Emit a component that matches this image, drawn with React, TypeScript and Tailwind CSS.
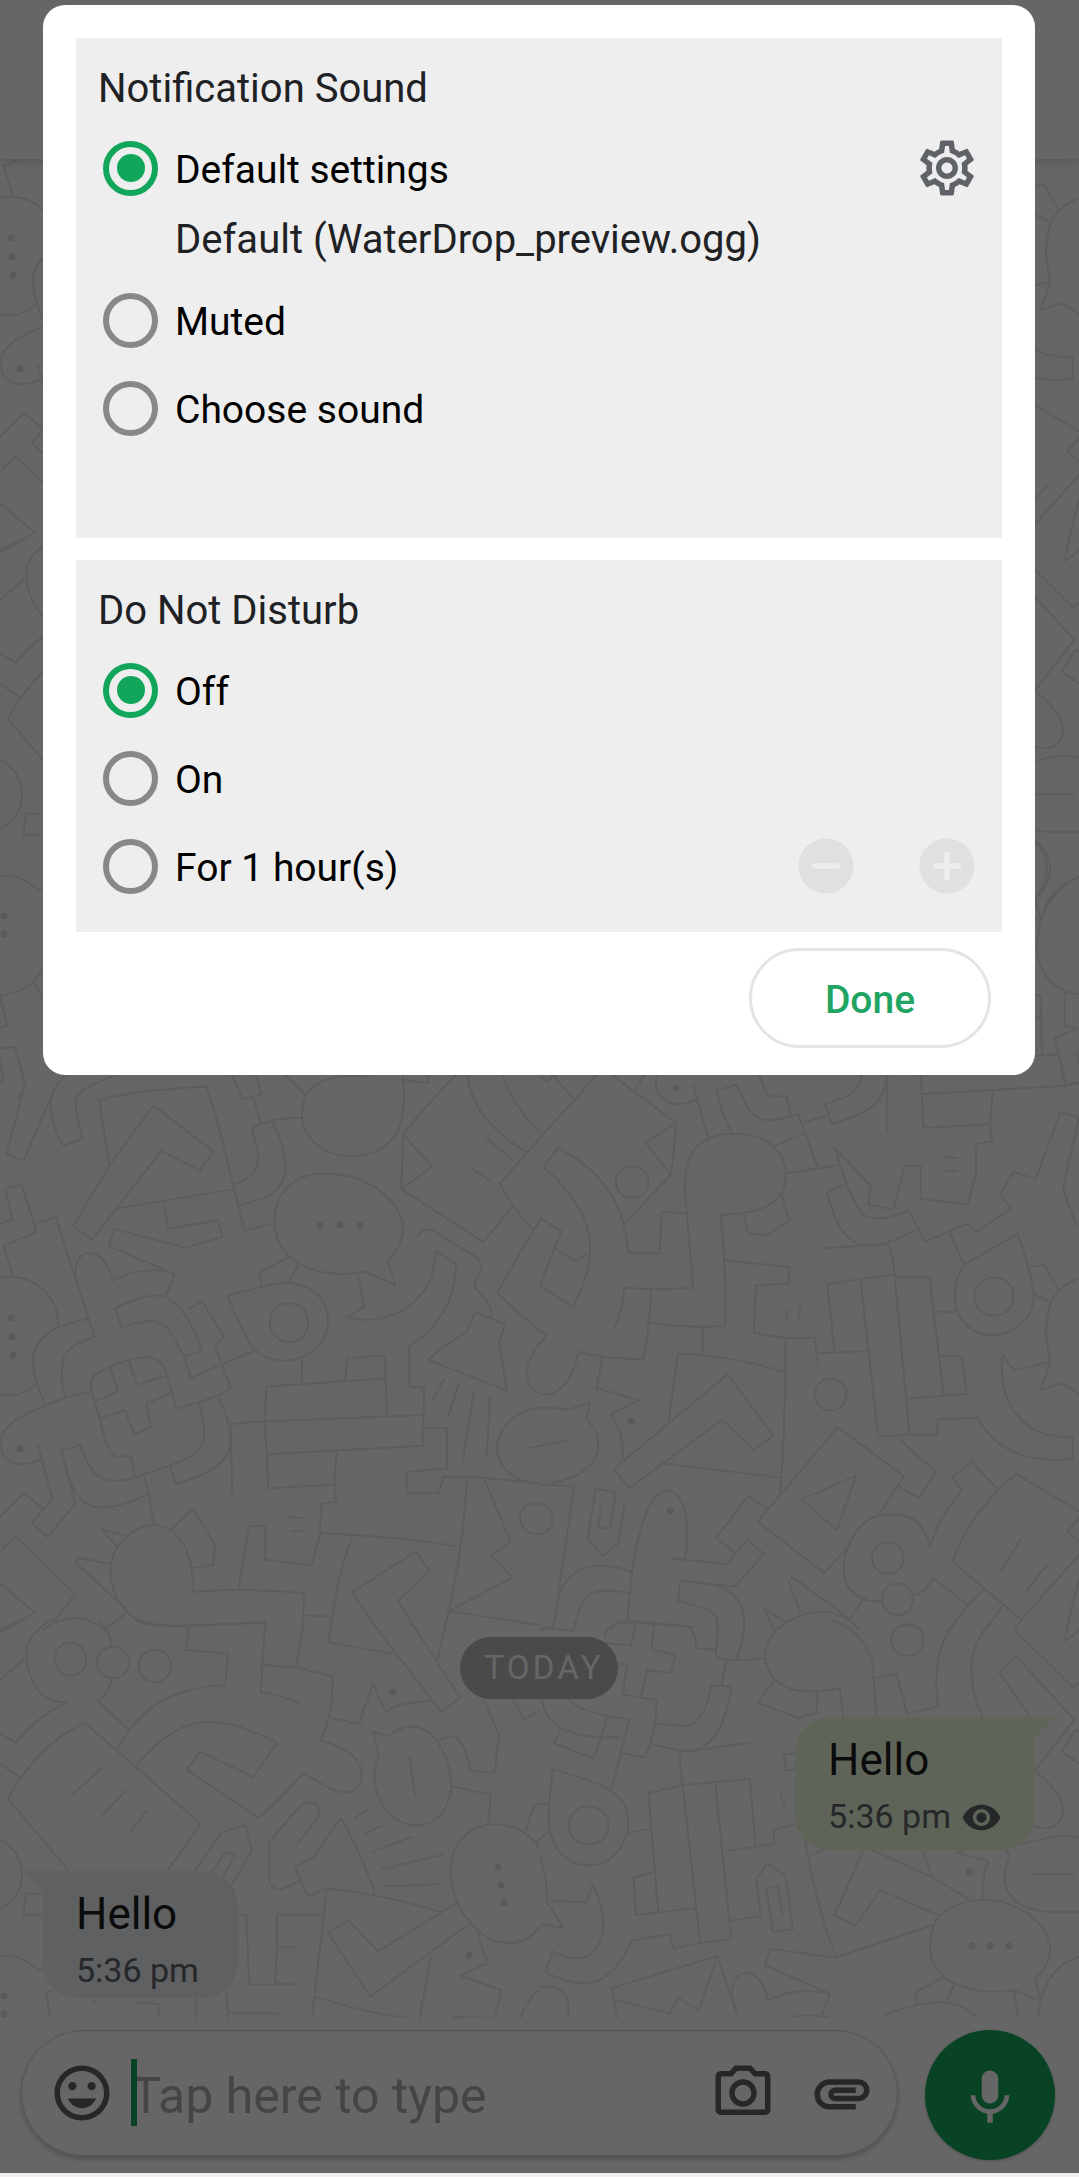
import { useState } from 'react';
import type { ReactNode } from 'react';
import { MdAddCircle, MdAttachment, MdMic, MdOutlineSettings, MdRemoveCircle, MdVisibility } from 'react-icons/md';

const upperLeftLines = [
  'M0 34L10 36L6 0M63 0L73 42L18 237L68 253L146 82M190 14Q148 50 147 100Q146 145 184 211L241 192Q205 90 230 66Q248 45 328 17',
  'M288 83Q400 56 598 46Q640 160 676 322L710 449L797 429M288 83L317 268M213 437L317 268L445 99L620 228L580 282L468 227L267 475ZM340 388L673 335M474 371L489 445L633 420L646 467L536 498L332 445L316 493L508 572L482 633',
  'M673 14L705 83L760 67L742 14M736 78L757 147M730 160L789 142Q828 210 829 270C829 330 790 360 687 380M730 160L750 235Q756 295 676 322M789 142Q820 135 877 134M828 14L890 73M1072 18Q876 0 877 128C878 190 940 242 1015 242C1105 242 1162 195 1170 115Q1176 70 1169 14M1173 28L1242 37L1244 14',
  'M1325 14Q1230 105 1171 180L1254 271L1165 333L1171 180M1165 333L1404 482L1488 381M1356 14C1370 110 1440 180 1530 230M1460 14Q1490 105 1568 175M1568 190L1452 318Q1490 390 1550 448M1568 420Q1490 540 1444 626L1568 732M1412 190L1490 252M1369 275L1429 315',
  'M797 420C800 345 850 290 945 290C1070 290 1170 370 1170 443Q1168 495 1126 535L1148 602L1058 564C950 590 795 550 797 420ZM836 524L754 568L759 608M867 545L838 598M1038 570L1058 662L1006 694C1150 720 1262 640 1265 507L1323 542Q1325 690 1188 773L1188 886L1231 889L1228 1052L775 1076M1211 468Q1225 440 1256 449L1380 522C1420 553 1375 580 1379 605C1384 628 1435 645 1426 694',
  'M1380 677L1466 712L1449 766L1472 898L1242 811Q1300 765 1356 732ZM1290 863L1257 923M1332 879L1302 968M1376 898L1343 1098M1423 914L1413 1084',
  'M661 631L759 608C870 575 952 620 952 704C950 800 820 850 742 785Q720 770 661 631ZM838 653C805 652 784 678 784 705C784 740 810 762 840 762C875 762 895 738 894 705C893 672 872 653 838 653ZM742 785L642 825M878 812L876 874M1002 867L1008 807L1117 799L1124 969M1117 864L773 886L768 984L775 1076L778 1171L973 1161M670 992Q710 985 768 984L1228 966M670 992L674 1187M1232 1002L1298 1003V1116L1180 1126V1184H1275L1288 1139H1356L1404 1142L1568 1158M977 1068L971 1161L976 1209L932 1215L930 1297L905 1386L769 1371V1278H723L691 1457M836 1252L878 1256M845 1291H878',
  'M15 331L63 321L106 453L11 493L38 578M0 431L36 420L15 331M102 430L162 412L274 747C190 775 160 800 190 918M0 582C95 567 170 630 170 719L255 695M170 719C80 765 75 825 134 941M0 908C45 916 78 905 102 881',
  'M220 575C210 490 310 490 327 590C385 560 450 552 508 572M334 668L353 720C470 690 475 690 534 803L586 787Q548 670 482 635Q430 620 334 668ZM545 672L588 647L650 748L625 772L670 892C630 918 580 930 512 948L482 845C465 795 420 792 320 830C255 855 260 875 267 902L293 990Q315 1075 335 1083L380 1081L392 1137M534 803L554 862L642 825M374 815L398 881L481 857M320 830L342 900L278 927M290 975L362 952L390 1020L439 1000L424 935L496 904',
  'M267 902Q180 915 120 945C0 990 0 1030 2 1052C8 1110 70 1112 116 1091M109 1048L152 1200L92 1269L138 1308L219 1213L178 1066L234 1051C265 1130 290 1180 417 1132C580 1080 620 1075 578 935M492 1107L511 1160Q668 1115 668 1045Q670 980 634 917M192 1120C230 1250 300 1245 432 1187L417 1132M432 1187L447 1272M0 1252L69 1185L125 1228',
  'M370 1305L297 1287L343 1338M326 1385L229 1365L219 1380L365 1507M370 1305C285 1375 325 1490 385 1530C430 1565 520 1558 769 1546M370 1305C470 1225 570 1310 559 1461Q730 1450 882 1465L880 1568M499 1285L561 1228L626 1335L618 1386L559 1395M0 1352L43 1305L219 1468L155 1545M0 1437L102 1521L0 1568M0 1326L13 1335M125 1568C200 1515 250 1530 304 1568L365 1521M548 1557V1568M769 1546V1568M882 1527L962 1531',
  'M930 1297Q1150 1305 1327 1334M1022 1307Q975 1430 960 1568M1356 1139Q1345 1360 1290 1568M1404 1142L1482 1321L1426 1359L1488 1422L1303 1515L1568 1555M1098 1568L1022 1463L1208 1348L1247 1403L1155 1486L1208 1568M1568 760C1515 830 1520 890 1568 905M1568 945C1420 965 1400 1120 1530 1153M1528 1060L1568 1053M1568 1213C1490 1210 1490 1300 1568 1301',
];

const upperRightLines = [
  'M0 18L22 34L37 14L97 80M165 14L0 190M210 14L397 149L381 294L307 203L397 149M303 14L275 59M381 294L246 429M340 14C325 80 380 115 454 83M445 40L491 198M513 57L571 42C620 150 640 155 751 124L807 271M513 57Q535 145 562 180M637 14L658 65Q675 78 717 73L729 125M935 14Q935 55 886 76L829 97L848 151C960 120 1005 90 1008 14M765 147L833 128M1010 14V178M1107 14L1116 162L1310 152M1113 67L1530 44L1516 0M1530 44L1568 38M1316 60L1310 152L1315 200L1269 207L1268 290L1244 376L1107 361V269H1060L1028 391L956 377L962 325L858 218Q910 390 945 408Q980 428 1073 395L1120 481L1242 431L1269 453L1370 389L1338 348L1377 286L1442 305L1513 119L1568 132L1521 332L1559 432H1568M1175 243L1215 248M1180 282H1215',
  'M446 610L427 401C410 280 420 180 565 178C660 180 715 225 715 300C710 380 630 405 525 405Q545 600 537 717C470 720 390 720 320 707M674 216L768 178M714 290L865 267M702 344L725 422L659 463L606 457L591 402M10 271L52 218C180 280 248 380 256 511L348 514L354 397L425 401M10 271C190 420 160 540 97 663L0 606M0 414L62 451L0 600M43 500L103 535L145 509M267 270C205 270 205 357 267 357C330 357 335 270 267 270Z',
  'M834 342L886 322M834 342C865 450 900 500 975 490Q1025 485 1092 448M815 499L1014 488Q1028 520 1031 572L835 599L857 789M932 588L984 1027L1075 1021L1031 572M1031 579H1133L1174 911M808 793L954 787M1190 452L1234 546M1150 676L1215 678M1164 801H1226L1241 907L1068 920M1073 1021H1155L1158 978L1273 974Q1350 1110 1549 1089V1027C1400 1035 1330 930 1345 795L1377 842L1485 817L1455 898L1518 877L1568 907M1234 546L1389 459Q1440 600 1436 645C1415 760 1250 780 1212 670Q1195 600 1234 546ZM1322 581C1245 581 1245 688 1322 688C1395 688 1395 581 1322 581ZM1421 552L1464 545L1511 618M1437 628L1490 653M1568 583C1465 615 1460 720 1485 817',
  'M537 532L723 552L725 598L628 603L622 736L714 751L799 749L809 830M717 670V704M757 660L753 700M446 610Q350 618 244 610Q245 665 217 721M322 616Q322 690 301 810Q180 808 113 789Q80 920 0 907M0 731L18 742L0 768M181 804L165 891L288 925L206 964Q245 1020 242 1088M473 719V796M375 980L401 794Q550 798 707 845M714 751Q715 980 698 1193M214 1118L546 852L678 1024L621 1064L530 979L260 1171ZM358 1101L698 1141M845 865C785 865 785 953 845 953C907 953 907 865 845 865Z',
  'M633 1265L866 1000L1058 1137L984 1249M633 1265L826 1408L902 1330M760 1203L919 1136L864 1288ZM1040 1030L1152 1126L1101 1199L1044 1166M660 1229L606 1192L513 1309L566 1352M380 1367L543 1384L602 1315L651 1355L567 1447L408 1430L401 1487C500 1510 520 1515 518 1568M505 1440Q600 1465 594 1568M984 1249C1050 1240 1110 1240 1134 1335Q1160 1250 1229 1178L1198 1141L1255 1096L1330 1173M984 1249C880 1270 820 1500 995 1487M1087 1473Q1125 1462 1142 1421L1244 1499M1012 1322C950 1322 950 1410 1012 1410C1073 1410 1073 1322 1012 1322ZM1040 1438C980 1438 980 1526 1040 1526C1100 1526 1100 1438 1040 1438ZM1568 1236L1384 1131Q1240 1250 1201 1378L1400 1539L1568 1358M1400 1311L1337 1409M1475 1385L1412 1463M1568 1255L1535 1291L1568 1322M1293 1453Q1240 1500 1190 1568M1345 1501L1298 1568M1400 1539L1378 1568M1568 1425L1530 1568',
  'M0 945Q45 944 79 952L147 932L134 977C210 1050 160 1140 30 1156M0 1053L81 1037M0 1160L99 1166L40 1558L0 1568M0 1215C48 1220 48 1295 0 1300M162 1171L220 1183L204 1283H170L178 1220M162 1171L139 1313L182 1361L228 1326L246 1213M255 1540C270 1320 310 1180 370 1178C430 1180 435 1290 422 1367M52 1483C80 1380 180 1370 270 1408M100 1568C120 1455 150 1450 260 1464M205 1568Q220 1540 255 1541L445 1560M758 1520L724 1436L735 1420L902 1538L945 1473M711 1544L652 1509L680 1568M690 1568C770 1500 870 1500 930 1568M1030 1568Q1070 1540 1110 1568',
];

const lowerLeftLines = [
  'M0 34Q40 18 65 0M0 170L79 101M120 20C60 65 70 130 105 190Q130 230 192 233Q110 270 45 346L0 318M120 20Q140 3 160 0M285 0Q315 20 325 76M325 163Q320 200 285 228L376 311M304 28L340 0M205 65C145 65 145 157 205 157C265 157 265 65 205 65ZM329 76C265 76 265 163 329 163C390 163 390 76 329 76ZM449 84C388 84 388 175 449 175C512 175 512 84 449 84Z',
  'M390 0Q440 22 545 17L770 7L757 203Q810 210 868 234M548 17L540 84L662 96L654 184Q430 190 340 366M394 410C520 270 620 250 804 346L735 442L581 370L542 422L751 557Q810 510 881 430C960 480 1030 520 1052 440C1050 390 1010 360 931 339Q970 260 965 158L862 134L766 127M882 0Q875 60 860 132M962 0L954 63L1143 96M1075 0L1281 259L1336 218L1190 0M1295 0L1270 115M954 274L1043 293L1083 177L1120 258Q1160 230 1250 228',
  'M22 502Q120 340 247 290L583 574L485 707M22 502L198 704M299 414L210 492M366 479L297 551M427 536L377 597M0 405L59 443M0 618C85 655 85 780 0 812M125 770L77 771L68 832L125 830M0 945Q60 940 108 986L133 975',
  'M565 707L644 597L714 578L731 649L670 750M615 710L656 651L683 665L645 728M862 632L925 555C935 510 890 500 865 530L782 625V725C782 755 800 760 815 758L872 736M857 695L911 667L990 557Q1060 680 1089 775M857 695L893 778L949 755Q1130 775 1278 822M949 755L906 1121M1028 560L1072 531M1053 605L1110 578M1077 654L1198 609M1104 702L1287 661M1115 750L1277 743',
  'M1083 314L1126 327C1240 240 1310 380 1311 470C1295 620 1120 610 1089 465Q1085 420 1100 379ZM1188 383L1206 500M1270 338L1316 327Q1350 340 1366 425L1436 430L1449 322L1403 222M1311 468L1425 492L1417 580M1568 520H1550L1522 605M1568 615L1550 630M1568 645C1510 560 1420 570 1380 587C1230 660 1340 910 1475 910Q1530 910 1568 865M1490 222L1521 280L1568 255',
  'M688 831H716L723 1027H858M860 1027L799 1020L804 922H865M804 922V830H938M953 882L1011 845L1098 933L1332 793M953 882L1075 1060L1370 850M1390 878Q1390 910 1418 966L1335 1001L1455 1042L1437 1121M1252 943L1218 1121M915 1060Q1070 1110 1200 1122M135 1045L144 1121M135 1045L160 1042M270 1068L276 1077L282 1068M392 1064L398 1077L460 1081V1121M568 1064V1121M658 1042L662 1121M662 1105L812 1108L813 1121M762 1108V1121M1568 1040Q1530 1065 1512 1121M1313 1117L1427 1121',
];

const lowerRightLines = [
  'M0 22L98 31L103 0M38 22L40 0M188 48Q195 0 280 8L430 18Q450 25 455 80L512 84Q520 40 512 0M190 65L264 72L280 8M332 14L324 82L393 99L381 149L312 141L293 217M220 122L254 127L241 210L339 226Q340 310 305 387L234 374M235 330Q20 340 5 222M82 222Q120 265 260 279L208 477M512 84V105Q560 118 657 108M595 0Q594 60 572 108M541 112L529 184L556 190Q530 370 420 370L324 350M529 184L498 186Q480 290 425 298L337 292M62 302L40 347L155 390Q175 350 195 270M425 370L612 345',
  'M725 0C640 50 640 120 683 167C730 210 810 205 872 192L882 272M683 167L633 233L753 276L804 261L806 204M850 0C930 30 970 80 970 160L978 272M970 165L1037 151L1068 263L1158 243Q1135 80 1215 0M1068 12C1005 12 1005 100 1068 100C1132 100 1132 12 1068 12ZM1315 0C1240 80 1240 170 1287 272M1400 0L1380 27L1549 189L1568 178M1540 0L1525 59L1568 30M1425 272L1335 147L1384 101L1554 281L1440 424M1568 312H1555L1519 371L1568 404M1440 424C1510 480 1540 530 1510 570C1490 590 1460 590 1432 578',
  'M37 419L172 462C250 500 260 530 256 590C225 720 90 710 47 640C20 590 20 560 37 419ZM142 525C65 525 65 632 142 632C218 632 218 525 142 525ZM0 518H25M0 616L25 597M255 600L318 588M0 665Q20 720 20 790L135 795L154 742C225 890 160 1000 37 933L16 991C130 1050 210 1030 266 902L377 885L389 925L466 909M20 793L68 866L0 857M409 375Q405 420 415 465L466 909L556 899L510 460M315 487L344 824M315 487L415 465L610 447L627 635M537 651L680 630V589L750 573M329 710L272 725L279 831L453 811M555 847L642 834L629 730L661 685L714 719L736 870L677 878L659 755L692 748L706 829M741 375L709 379L716 423L741 420M700 490L712 529M741 490L744 515',
  'M770 610Q800 800 862 949L1145 858M787 662L825 645M941 647L856 832L919 860L989 760L1160 832M965 647L1142 725L1250 787M1112 647L1142 725M1213 655L1303 679Q1285 720 1290 785M1213 655L1235 647M1355 645L1368 667C1330 730 1350 820 1500 823H1568M1390 632Q1450 620 1480 612T1568 612M1432 716H1556M1568 948Q1460 980 1449 1121M1568 612',
  'M1165 830C1240 770 1340 780 1410 820C1500 880 1505 950 1440 1012L1457 1073L1377 1042C1230 1060 1130 1010 1135 910Q1138 860 1165 830ZM1175 1006L1092 1046L1098 1085M1205 1025L1180 1077M1377 1042L1392 1121M998 1113C1120 1070 1210 1055 1273 1121M862 951L671 926L654 972L844 1052L820 1112M225 1121L208 1036L516 946L578 1121M516 946L461 1100L401 1062L377 1108L218 1069M565 1090C545 1030 570 990 605 994Q640 995 664 1070Q750 1030 844 1052M0 1033C65 1025 95 1060 80 1121M725 1121Q770 1105 845 1121',
];

const sideLeftLines = [
  'M0 1275Q60 1270 98 1238L125 1195M98 1238L125 1283M0 1280L21 1360L0 1367M0 1425L43 1419L73 1525L50 1568M0 1450L10 1517L0 1520M125 1205L98 1238',
];

const sideRightLines = [
  'M1568 945C1440 990 1390 1210 1530 1265L1568 1272M1440 1010L1458 1070M1440 845Q1510 910 1440 1010M1440 1275H1456L1460 1442M1440 1338H1455M1440 1445L1507 1441M1526 1266V1360L1568 1367L1496 1393L1530 1525L1568 1518M1568 1430L1562 1436L1568 1465',
];

const dots: [number, number, number][] = [
  [320, 1225, 3.5], [340, 1225, 3.5], [360, 1225, 3.5], [11, 1318, 3.5], [12, 1337, 3.5], [13, 1355, 3.5],
  [20, 1449, 3.5], [676, 1088, 3.5], [631, 1421, 3.5], [670, 1511, 3.5], [393, 1692, 3.5], [498, 1867, 3.5],
  [501, 1885, 3.5], [504, 1903, 3.5], [469, 1955, 3.5], [4, 1996, 3.5], [4, 2014, 3.5], [969, 1872, 3.5],
  [972, 1946, 3.5], [990, 1946, 3.5], [1009, 1946, 3.5],
];

function Lines({ paths }: { paths: string[] }) {
  return (
    <>
      {paths.map((d) => (
        <path key={d} d={d} vectorEffect="non-scaling-stroke" />
      ))}
    </>
  );
}

/** Line-art wallpaper; the tile repeats every 1080 units vertically. */
function Wallpaper() {
  return (
    <svg
      aria-hidden="true"
      className="absolute inset-0 size-full"
      viewBox="0 159 1079 1859"
      preserveAspectRatio="xMinYMax slice"
      fill="none"
      stroke="#e8e8e8"
      strokeWidth="2"
      strokeLinejoin="round"
    >
      <defs>
        <g id="doodles">
          <g transform="translate(0 1070) scale(.3444 .3571)"><Lines paths={upperLeftLines} /></g>
          <g transform="translate(540 1070) scale(.3438 .3571)"><Lines paths={upperRightLines} /></g>
          <g transform="translate(0 1620) scale(.3444 .3552)"><Lines paths={lowerLeftLines} /></g>
          <g transform="translate(540 1620) scale(.3438 .3552)"><Lines paths={lowerRightLines} /></g>
          {dots.map(([x, y, r]) => (
            <circle key={`${x}-${y}`} cx={x} cy={y} r={r} fill="#e0e0e0" stroke="none" />
          ))}
        </g>
      </defs>
      <use href="#doodles" />
      <use href="#doodles" y="-1080" />
      <g transform="translate(0 540) scale(.3444 .3571)"><Lines paths={sideLeftLines} /></g>
      <g transform="translate(540 540) scale(.3438 .3571)"><Lines paths={sideRightLines} /></g>
    </svg>
  );
}

function SmileIcon() {
  return (
    <svg viewBox="0 0 24 24" fill="currentColor" className="size-[66px]" aria-hidden="true">
      <path d="M11.99 2C6.47 2 2 6.48 2 12s4.47 10 9.99 10C17.52 22 22 17.52 22 12S17.52 2 11.99 2zM12 20c-4.42 0-8-3.58-8-8s3.58-8 8-8 8 3.58 8 8-3.58 8-8 8z" />
      <circle cx="15.5" cy="9.5" r="1.5" />
      <circle cx="8.5" cy="9.5" r="1.5" />
      <path d="M12 17.5c2.33 0 4.31-1.46 5.11-3.5H6.89c.8 2.04 2.78 3.5 5.11 3.5z" />
    </svg>
  );
}

function CameraIcon() {
  return (
    <svg viewBox="0 0 24 24" fill="currentColor" className="size-[66px]" aria-hidden="true">
      <path d="M20 4h-3.17L15 2H9L7.17 4H4c-1.1 0-2 .9-2 2v12c0 1.1.9 2 2 2h16c1.1 0 2-.9 2-2V6c0-1.1-.9-2-2-2zm0 14H4V6h4.05l1.83-2h4.24l1.83 2H20v12zM12 7c-2.76 0-5 2.24-5 5s2.24 5 5 5 5-2.24 5-5-2.24-5-5-5zm0 8c-1.65 0-3-1.35-3-3s1.35-3 3-3 3 1.35 3 3-1.35 3-3 3z" />
    </svg>
  );
}

function Section({ title, className, children }: { title: string; className: string; children: ReactNode }) {
  return (
    <fieldset className={`bg-[#eeeeee] px-[22px] ${className}`}>
      <legend className="float-left w-full pt-[29px] pb-[13px] text-[40px] leading-[44px] text-[#202124]">{title}</legend>
      <div className="clear-both">{children}</div>
    </fieldset>
  );
}

interface OptionProps {
  name: string;
  label: string;
  checked: boolean;
  onSelect: () => void;
  children?: ReactNode;
}

function Option({ name, label, checked, onSelect, children }: OptionProps) {
  return (
    <div className="flex h-[88px] items-center justify-between">
      <label className="flex items-center gap-[17px] pl-[5px] text-black">
        <input
          type="radio"
          name={name}
          checked={checked}
          onChange={onSelect}
          className="grid size-[55px] appearance-none place-items-center rounded-full border-[6px] border-[#888888] before:size-7 before:rounded-full before:content-[''] checked:border-[#12a65c] checked:before:bg-[#12a65c]"
        />
        <span className="pt-1">{label}</span>
      </label>
      {children}
    </div>
  );
}

function NotificationDialog() {
  const [sound, setSound] = useState('default');
  const [dnd, setDnd] = useState('off');
  return (
    <div
      role="dialog"
      aria-label="Notifications"
      className="mt-[5px] mr-[44px] ml-[43px] rounded-[22px] bg-white px-[33px] pt-[33px] pb-[27px] text-[39px] leading-[44px]"
    >
      <Section title="Notification Sound" className="pb-[86px]">
        <Option name="sound" label="Default settings" checked={sound === 'default'} onSelect={() => setSound('default')}>
          <button type="button" aria-label="Sound settings" className="text-[#5f6368]">
            <MdOutlineSettings className="size-[66px]" />
          </button>
        </Option>
        <p className="h-16 pt-1.5 pl-[77px] text-[40px] leading-[44px] text-[#202124]">Default (WaterDrop_preview.ogg)</p>
        <Option name="sound" label="Muted" checked={sound === 'muted'} onSelect={() => setSound('muted')} />
        <Option name="sound" label="Choose sound" checked={sound === 'choose'} onSelect={() => setSound('choose')} />
      </Section>
      <Section title="Do Not Disturb" className="mt-[22px] pb-[22px]">
        <Option name="dnd" label="Off" checked={dnd === 'off'} onSelect={() => setDnd('off')} />
        <Option name="dnd" label="On" checked={dnd === 'on'} onSelect={() => setDnd('on')} />
        <Option name="dnd" label="For 1 hour(s)" checked={dnd === 'hours'} onSelect={() => setDnd('hours')}>
          <div className="flex gap-[55px] text-[#e0e0e0]">
            <button type="button" aria-label="Fewer hours" disabled>
              <MdRemoveCircle className="size-[66px]" />
            </button>
            <button type="button" aria-label="More hours" disabled>
              <MdAddCircle className="size-[66px]" />
            </button>
          </div>
        </Option>
      </Section>
      <div className="mt-4 flex justify-end pr-[11px]">
        <button
          type="button"
          className="h-[100px] w-[242px] rounded-full border-[3px] border-[#e4e4e4] pt-1 font-medium text-[#1fa463]"
        >
          Done
        </button>
      </div>
    </div>
  );
}

function ReceivedMessage() {
  return (
    <div className="relative rounded-[35px] rounded-tl-none bg-[#ebf0f5] pt-[17px] pr-[39px] pb-2 pl-[33px]">
      <svg viewBox="0 0 20 20" className="absolute top-0 -left-5 size-5 fill-[#ebf0f5]" aria-hidden="true">
        <path d="M0 0H20V20Z" />
      </svg>
      <p className="text-[44px] leading-[52px] text-[#1c1c1e]">Hello</p>
      <p className="pt-[11px] text-[34px] leading-[39px] text-[#5f6368]">5:36 pm</p>
    </div>
  );
}

function SentMessage() {
  return (
    <div className="relative rounded-[35px] rounded-tr-none bg-[#edfbdc] pt-[17px] pr-[33px] pb-3 pl-[33px]">
      <svg viewBox="0 0 20 20" className="absolute top-0 -right-5 size-5 fill-[#edfbdc]" aria-hidden="true">
        <path d="M0 0H20L0 20Z" />
      </svg>
      <p className="text-[44px] leading-[52px] text-[#1c1c1e]">Hello</p>
      <p className="flex gap-2.5 pt-[11px] text-[34px] leading-[39px] text-[#5f6368]">
        5:36 pm
        <MdVisibility className="size-[41px]" aria-label="Seen" />
      </p>
    </div>
  );
}

export default function App() {
  return (
    <div className="flex min-h-screen flex-col bg-[#f3eef1] font-[Roboto,sans-serif]">
      <div className="relative flex flex-1 flex-col bg-white">
        <header className="z-10 h-[159px] bg-white shadow-[0_2px_10px_rgba(0,0,0,0.16)]" />
        <main className="relative flex flex-1 flex-col justify-end pr-[44px] pb-5 pl-[43px]">
          <Wallpaper />
          <div className="relative flex flex-col">
            <time className="mb-[18px] self-center rounded-full bg-[#b8b8b8] pr-3.5 pl-6 text-[33px] leading-[62px] tracking-widest text-white">
              TODAY
            </time>
            <div className="mb-[21px] flex justify-end">
              <SentMessage />
            </div>
            <div className="flex">
              <ReceivedMessage />
            </div>
          </div>
        </main>
        <footer className="flex items-start gap-[27px] bg-white pt-3 pr-6 pb-[13px] pl-[21px]">
          <form className="flex h-[126px] flex-1 items-center rounded-full border border-[#d4d4d4] pr-[22px] pl-[27px] text-[#5f6368] shadow-[0_3px_5px_rgba(0,0,0,0.22)]">
            <button type="button" aria-label="Insert emoji">
              <SmileIcon />
            </button>
            <div className="relative ml-4 flex min-w-0 flex-1 items-center">
              <input
                type="text"
                aria-label="Message"
                placeholder="Tap here to type"
                className="h-[69px] w-full pt-1.5 text-[50px] caret-[#12a85a] outline-none placeholder:text-[#adadad]"
              />
              <span className="absolute top-0 left-0 h-[67px] w-1.5 bg-[#12a85a]" />
            </div>
            <button type="button" aria-label="Take photo">
              <CameraIcon />
            </button>
            <button type="button" aria-label="Attach file" className="ml-[33px]">
              <MdAttachment className="size-[66px]" />
            </button>
          </form>
          <button
            type="button"
            aria-label="Record voice message"
            className="grid size-[130px] place-items-center rounded-full bg-[#12a85a] pt-1.5 text-white shadow-[0_1px_3px_rgba(0,0,0,0.25)]"
          >
            <MdMic className="size-[66px]" />
          </button>
        </footer>
        <div className="absolute inset-0 z-20 bg-black/60">
          <NotificationDialog />
        </div>
      </div>
      <div className="h-1" />
    </div>
  );
}
